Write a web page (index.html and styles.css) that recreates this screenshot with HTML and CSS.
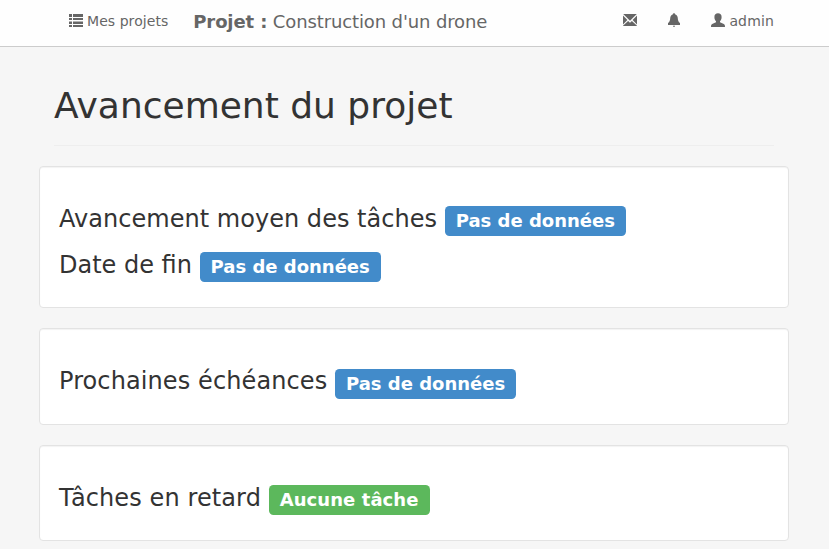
FILE: index.html
```html
<!DOCTYPE html>
<html lang="fr">
<head>
<meta charset="utf-8">
<title>Avancement du projet</title>
<link rel="stylesheet" href="styles.css">
</head>
<body>
<nav class="navbar">
  <a class="link"><svg class="icon" viewBox="0 0 14 14"><path d="M0 0h3v3H0zM4 0h10v3H4zM0 4h3v2H0zM4 4h10v2H4zM0 7.500h3v2.500H0zM4 7.500h10v2.500H4zM0 11h3v2H0zM4 11h10v2H4z"/></svg><span>Mes projets</span></a>
  <span class="brand"><b>Projet :</b> Construction d'un drone</span>
  <div class="right">
    <a class="link"><svg class="icon" viewBox="0 0 14 14"><path d="M.2 0h13.600L7 6.800zM0 1.400 4.400 6 0 10.400zM14 1.400 9.600 6 14 10.400zM5.100 7 7 8.800 8.900 7 14 11.700V12H0v-.3z"/></svg></a>
    <a class="link"><svg class="icon" viewBox="0 0 14 14"><path d="M7-.8a1.300 1.300 0 0 1 1.300 1.200C10 1 10.700 2.400 10.800 4.200c.1 2.200.6 3.700 2.200 4.800V11H1V9C2.600 7.900 3.100 6.400 3.200 4.200 3.300 2.400 4 1 5.700.4A1.300 1.300 0 0 1 7-.8zM5.900 11.800h2.200a1.100 1.100 0 0 1-2.200 0z"/></svg></a>
    <a class="link"><svg class="icon" viewBox="0 0 14 14"><path d="M7-.8c2.200 0 3.600 1.300 3.600 3.700 0 2-.7 3.500-1.600 4.400v1l3.800 1.600c.9.400 1.200 1.200 1.200 3.100H0c0-1.900.3-2.700 1.200-3.100L5 8.300v-1C4.100 6.400 3.400 4.900 3.400 2.900 3.400.5 4.800-.8 7-.8z"/></svg><span>admin</span></a>
  </div>
</nav>
<main class="container">
  <h1>Avancement du projet</h1>
  <section class="well">
    <h3><span class="average">Avancement moyen des tâches</span> <span class="label">Pas de données</span></h3>
    <h3>Date de fin <span class="label">Pas de données</span></h3>
  </section>
  <section class="well"><h3><span class="wide">Prochaines échéances</span> <span class="label">Pas de données</span></h3></section>
  <section class="well"><h3><span class="wide">Tâches en retard</span> <span class="label success">Aucune tâche</span></h3></section>
</main>
</body>
</html>
```
FILE: styles.css
```css
* { box-sizing: border-box; }
html { overflow: hidden; }
body {
  margin: 0;
  background: #f6f6f6;
  color: #333;
  font: 14px/20px "DejaVu Sans", sans-serif;
}
.navbar {
  display: flex;
  align-items: center;
  height: 47px;
  padding: 0 55px 5px 69px;
  background: #fefefe;
  border-bottom: 1px solid #ccc;
  color: #666;
  white-space: nowrap;
}
.link { display: flex; gap: 4px; letter-spacing: .06px; }
.icon { width: 14px; height: 14px; margin-top: 3px; fill: #666; overflow: visible; }
.brand { margin: 2px 0 0 25px; font-size: 18px; letter-spacing: -.12px; }
.right { display: flex; gap: 30px; margin-left: auto; }
.right .link span { letter-spacing: .15px; }
.container { width: 750px; margin: 0 0 0 39px; }
h1 {
  height: 60px;
  margin: 39px 15px 20px;
  padding-bottom: 20px;
  border-bottom: 1px solid #eee;
  font-size: 36px;
  line-height: 39px;
  font-weight: 400;
}
.well {
  margin-bottom: 20px;
  padding: 19px;
  background: #fff;
  border: 1px solid #e3e3e3;
  border-radius: 4px;
  box-shadow: inset 0 1px 1px rgba(0, 0, 0, .05);
}
.well:first-of-type { margin-top: -.32px; }
h3 {
  margin: 20px 0 10px;
  font-size: 24px;
  line-height: 1.1;
  font-weight: 400;
}
.average { letter-spacing: .03px; }
.wide { letter-spacing: .1px; }
.label {
  padding: .2em 11px .3em;
  border-radius: .25em;
  background: #428bca;
  color: #fff;
  font-size: 18px;
  line-height: 1;
  font-weight: 700;
}
.success { background: #5cb85c; letter-spacing: .08px; }
```
